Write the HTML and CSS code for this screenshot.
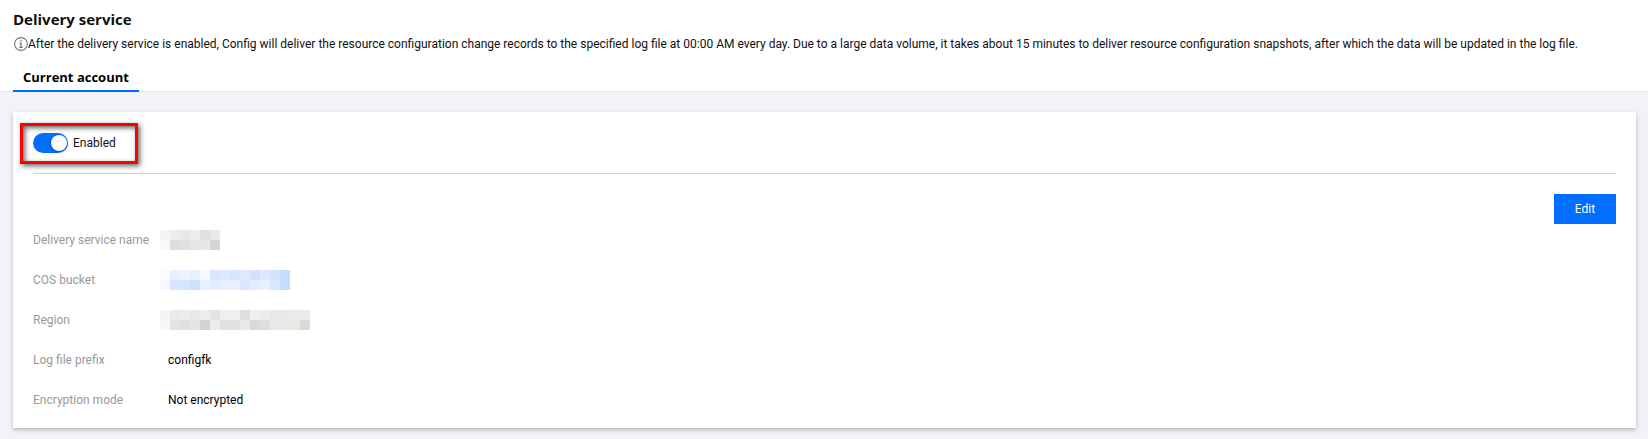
FILE: index.html
```
<!DOCTYPE html>
<html lang="en">
  <head>
    <meta charset="UTF-8" />
    <meta name="viewport" content="width=device-width, initial-scale=1.0" />
    <title>Delivery service</title>
    <link rel="stylesheet" href="styles.css">
  </head>
  <body>
    <header class="header">
      <h1 class="title">Delivery service</h1>
      <p class="hint">
        <svg class="infoIcon" viewBox="0 0 14 14" width="14" height="14" fill="none" stroke="#777" aria-hidden="true">
          <circle cx="7" cy="7" r="6.4" stroke-width="1.1" />
          <path d="M7 3v1.6M5.4 6.2H7v4M5.2 10.4h3.6" stroke-width="1.3" />
        </svg>
        <span>After the delivery service is enabled, Config will deliver the resource configuration change records to the specified log file at 00:00 AM every day. Due to a large data volume, it takes about 15 minutes to deliver resource configuration snapshots, after which the data will be updated in the log file.</span>
      </p>
      <nav class="tabs">
        <a class="tab" href="#current">Current account</a>
      </nav>
    </header>

    <main class="card" id="current">
      <div class="switchRow">
        <label class="switch" for="enabled">
          <input type="checkbox" id="enabled" class="toggle" checked />
          Enabled
        </label>
      </div>

      <div class="details">
        <dl class="fields">
          <dt>Delivery service name</dt>
          <dd>
            <svg class="mosaic" width="60" height="20" viewBox="0 0 6 2" shape-rendering="crispEdges" aria-hidden="true">
              <path fill="#f6f4f5" d="M0 0h1v1H0z" /><path fill="#eceeed" d="M1 0h1v1H1z" />
              <path fill="#e9e8e7" d="M2 0h1v1H2z" /><path fill="#ececee" d="M3 0h1v1H3z" />
              <path fill="#e0e0e0" d="M4 0h1v1H4z" /><path fill="#e9e9e8" d="M5 0h1v1H5z" />
              <path fill="#f9f8f6" d="M0 1h1v1H0z" /><path fill="#dddddd" d="M1 1h1v1H1z" />
              <path fill="#dfe1e0" d="M2 1h1v1H2z" /><path fill="#e6e6e7" d="M3 1h1v1H3z" />
              <path fill="#e7e7ea" d="M4 1h1v1H4z" /><path fill="#d6d5d3" d="M5 1h1v1H5z" />
            </svg>
          </dd>

          <dt>COS bucket</dt>
          <dd>
            <svg class="mosaic" width="130" height="20" viewBox="0 0 13 2" shape-rendering="crispEdges" aria-hidden="true">
              <path fill="#fafbff" d="M0 0h1v1H0z" /><path fill="#e8f1ff" d="M1 0h1v1H1z" />
              <path fill="#eff3ff" d="M2 0h1v1H2z" /><path fill="#e7f0ff" d="M3 0h1v1H3z" />
              <path fill="#f5f9ff" d="M4 0h1v1H4z" /><path fill="#dbe7ff" d="M5 0h1v1H5z" />
              <path fill="#dfe8ff" d="M6 0h1v1H6z" /><path fill="#d5e6ff" d="M7 0h1v1H7z" />
              <path fill="#dfe8ff" d="M8 0h1v1H8z" /><path fill="#d3e1ff" d="M9 0h1v1H9z" />
              <path fill="#dfe8ff" d="M10 0h1v1H10z" /><path fill="#d0e4ff" d="M11 0h1v1H11z" />
              <path fill="#c4ddff" d="M12 0h1v2H12z" />
              <path fill="#f7f9ff" d="M0 1h1v1H0z" /><path fill="#d5e5ff" d="M1 1h2v1H1z" />
              <path fill="#cfdfff" d="M3 1h1v1H3z" /><path fill="#e6f1ff" d="M4 1h1v1H4z" />
              <path fill="#e3ebff" d="M5 1h1v1H5z" /><path fill="#e8f0ff" d="M6 1h2v1H6z" />
              <path fill="#dce7ff" d="M8 1h1v1H8z" /><path fill="#e1eeff" d="M9 1h1v1H9z" />
              <path fill="#e8efff" d="M10 1h1v1H10z" /><path fill="#d6e7ff" d="M11 1h1v1H11z" />
            </svg>
          </dd>

          <dt>Region</dt>
          <dd>
            <svg class="mosaic" width="150" height="20" viewBox="0 0 15 2" shape-rendering="crispEdges" aria-hidden="true">
              <path fill="#f5f5f5" d="M0 0h1v1H0z" /><path fill="#e9e9e9" d="M1 0h1v1H1z" />
              <path fill="#ecedef" d="M2 0h1v1H2z" /><path fill="#e8e9e6" d="M3 0h1v1H3z" />
              <path fill="#ebecee" d="M4 0h1v1H4z" /><path fill="#e5e4e2" d="M5 0h1v1H5z" />
              <path fill="#edeef1" d="M6 0h1v1H6z" /><path fill="#f1f0ec" d="M7 0h1v1H7z" />
              <path fill="#dededd" d="M8 0h1v1H8z" /><path fill="#efefef" d="M9 0h1v1H9z" />
              <path fill="#ededeb" d="M10 0h1v1H10z" /><path fill="#e7e8e9" d="M11 0h2v1H11z" />
              <path fill="#ebeae8" d="M13 0h1v1H13z" /><path fill="#e9eceb" d="M14 0h1v1H14z" />
              <path fill="#f3f8f9" d="M0 1h1v1H0z" /><path fill="#e3e2dd" d="M1 1h1v1H1z" />
              <path fill="#dfe0e2" d="M2 1h1v1H2z" /><path fill="#e3e5e2" d="M3 1h1v1H3z" />
              <path fill="#d4d4d2" d="M4 1h1v1H4z" /><path fill="#ecede8" d="M5 1h1v1H5z" />
              <path fill="#e0e2e4" d="M6 1h1v1H6z" /><path fill="#e2e1dc" d="M7 1h1v1H7z" />
              <path fill="#eae9e5" d="M8 1h1v1H8z" /><path fill="#d9d8da" d="M9 1h1v1H9z" />
              <path fill="#dbdfe0" d="M10 1h1v1H10z" /><path fill="#e8e8e8" d="M11 1h2v1H11z" />
              <path fill="#e9e8e0" d="M13 1h1v1H13z" /><path fill="#d9d9d9" d="M14 1h1v1H14z" />
            </svg>
          </dd>

          <dt>Log file prefix</dt>
          <dd>configfk</dd>

          <dt>Encryption mode</dt>
          <dd>Not encrypted</dd>
        </dl>
        <button type="button" class="edit">Edit</button>
      </div>
    </main>
  </body>
</html>
```
FILE: styles.css
```
* {
  box-sizing: border-box;
}

body {
  margin: 0;
  background-color: #f2f3f7;
  color: #111;
  font-family: Roboto, "Open Sans", sans-serif;
  font-size: 12px;
  line-height: 20px;
}

.header {
  padding: 9px 12px 0 13px;
  background-color: #fff;
  border-bottom: 1px solid #e5e7ed;
}

.title {
  margin: 0;
  font-family: "Open Sans", sans-serif;
  font-size: 15px;
  font-weight: 700;
  line-height: 20px;
}

.hint {
  display: flex;
  align-items: center;
  margin: 5px 0 0;
}

.infoIcon {
  flex: none;
  margin-left: 1px;
}

.tabs {
  display: flex;
  margin-top: 10px;
}

.tab {
  margin-bottom: -1px;
  padding: 3px 10px;
  border-bottom: 2px solid #006eff;
  color: #000;
  font-family: "Open Sans", sans-serif;
  font-size: 13px;
  font-weight: 700;
  text-decoration: none;
}

.card {
  margin: 20px 12px 11px 13px;
  padding: 21px 20px 18px;
  background-color: #fff;
  box-shadow: 0 2px 4px rgba(54, 58, 80, 0.32);
}

.switchRow {
  display: flex;
  padding-bottom: 20px;
  border-bottom: 1px solid #cfd0d8;
}

.switch {
  position: relative;
  display: flex;
  align-items: center;
  gap: 5px;
}

/* red frame round the switch */
.switch::after {
  content: "";
  position: absolute;
  inset: -10px -22px -11px -13px;
  border: 3px solid #f00;
  box-shadow: 2px 2px 5px rgba(0, 0, 0, 0.6),
    inset 2px 2px 5px rgba(0, 0, 0, 0.6);
  pointer-events: none;
}

.toggle {
  appearance: none;
  display: flex;
  width: 35px;
  height: 20px;
  margin: 0;
  padding: 2px 1px;
  border-radius: 10px;
  background-color: #aaa;
  cursor: pointer;
}

.toggle::before {
  content: "";
  width: 16px;
  height: 16px;
  border-radius: 50%;
  background-color: #fff;
  box-shadow: 0 1px 3px rgba(0, 0, 0, 0.3);
}

.toggle:checked {
  justify-content: flex-end;
  background-color: #006eff;
}

.details {
  display: flex;
  justify-content: space-between;
  align-items: flex-start;
  padding-top: 20px;
}

.fields {
  display: grid;
  grid-template-columns: 135px auto;
  row-gap: 20px;
  margin: 36px 0 0;
}

.fields dt {
  color: #999;
}

.fields dd {
  margin: 0;
  color: #000;
}

.mosaic {
  display: block;
  margin-left: -8px;
}

.edit {
  min-width: 62px;
  height: 30px;
  padding: 0 20px;
  border: none;
  background-color: #006eff;
  color: #fff;
  font-family: inherit;
  font-size: 12px;
  cursor: pointer;
}
```
